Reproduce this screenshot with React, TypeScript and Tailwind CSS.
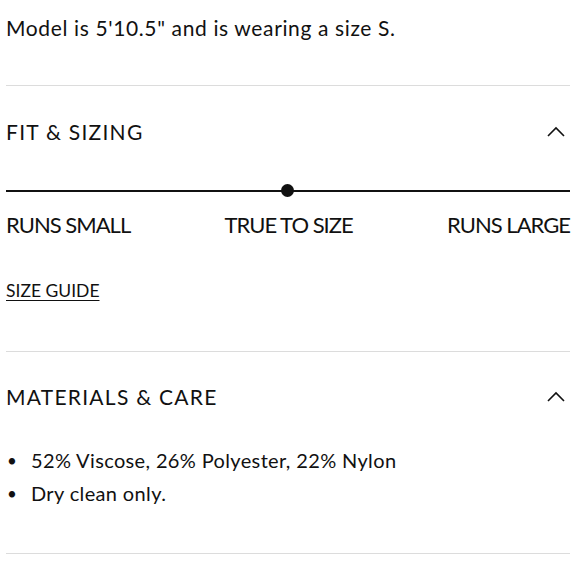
function Chevron() {
  return (
    <svg width="18" height="11" viewBox="0 0 18 11" className="mr-[5px]" fill="none">
      <polyline points="1,10 9,2 17,10" stroke="#111" strokeWidth="1.6" />
    </svg>
  );
}

function SectionHeader({ title }: { title: string }) {
  return (
    <div className="flex items-center justify-between">
      <h3 className="text-[21px] leading-none tracking-[0.06em] text-[#111]">{title}</h3>
      <Chevron />
    </div>
  );
}

export default function App() {
  return (
    <div className="w-[580px] h-[580px] bg-white px-[6px] text-[#111]" style={{ fontFamily: 'Lato, "Noto Sans", sans-serif' }}>
      <p className="pt-[16px] text-[21px] leading-[24px] tracking-[0.03em]">Model is 5'10.5" and is wearing a size S.</p>

      <div className="mt-[45px] border-t border-[#dcdcdc] w-[564px]" />

      <div className="pt-[35px] w-[564px]">
        <SectionHeader title="FIT & SIZING" />

        <div className="relative mt-[42px] h-[13px] flex items-center">
          <div className="w-full h-[2px] bg-[#111]" />
          <div className="absolute left-[275px] w-[13px] h-[13px] rounded-full bg-[#111]" />
        </div>

        <div className="mt-[16px] flex justify-between text-[22px] leading-[24px] tracking-[-0.045em]">
          <span>RUNS SMALL</span>
          <span>TRUE TO SIZE</span>
          <span>RUNS LARGE</span>
        </div>

        <a className="inline-block mt-[44px] text-[17.5px] leading-[20px] underline underline-offset-[3px]">SIZE GUIDE</a>

        <div className="mt-[48px] border-t border-[#dcdcdc]" />

        <div className="pt-[34px]">
          <SectionHeader title="MATERIALS & CARE" />
        </div>

        <ul className="mt-[37px] text-[20px] leading-[33px] tracking-[0.018em]">
          <li className="flex items-center">
            <span className="w-[25px] pl-[1px] text-[17px]">•</span>
            <span>52% Viscose, 26% Polyester, 22% Nylon</span>
          </li>
          <li className="flex items-center">
            <span className="w-[25px] pl-[1px] text-[17px]">•</span>
            <span>Dry clean only.</span>
          </li>
        </ul>

        <div className="mt-[43px] border-t border-[#dcdcdc]" />
      </div>
    </div>
  );
}
